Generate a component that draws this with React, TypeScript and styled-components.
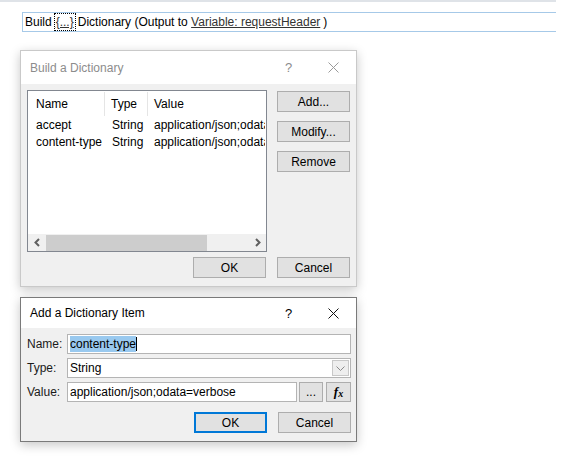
import React from "react";
import styled, { createGlobalStyle } from "styled-components";

const GlobalStyle = createGlobalStyle`
  html, body {
    margin: 0;
    padding: 0;
    background: #fff;
  }
  body {
    font-family: "Segoe UI", "Liberation Sans", Arial, sans-serif;
    font-size: 12px;
    color: #000;
  }
`;

const Page = styled.div`
  width: 568px;
  height: 458px;
  overflow: hidden;
  display: flex;
  flex-direction: column;
`;

const ActionStrip = styled.div`
  width: 556px;
  box-sizing: border-box;
  border-top: 2px solid #dfe3e8;
  padding: 10px 0 0 22px;
`;

const BuildRow = styled.div`
  height: 20px;
  box-sizing: border-box;
  border: 1px solid #a6c9e8;
  border-right: none;
  display: flex;
  align-items: center;
  padding-left: 2px;
  white-space: nowrap;
`;

const Token = styled.span`
  margin: 0 2px;
  height: 18px;
  box-sizing: border-box;
  border: 1px dotted #000;
  padding: 0 1px;
  display: flex;
  align-items: center;
  text-decoration: underline;
  color: #333;
`;

const VarLink = styled.span`
  text-decoration: underline;
  color: #333;
  margin-right: 3px;
`;

const Stack = styled.div`
  margin: 18px 0 0 20px;
  display: flex;
  flex-direction: column;
  gap: 10px;
`;

const Dialog = styled.div<{ $border: string }>`
  width: 337px;
  box-sizing: border-box;
  border: 1px solid ${(p) => p.$border};
  background: #f0f0f0;
  box-shadow: 0 3px 10px rgba(0, 0, 0, 0.22);
`;

const TitleBar = styled.div<{ $h: number; $color: string }>`
  height: ${(p) => p.$h}px;
  background: #fff;
  display: flex;
  align-items: center;
  padding-left: 9px;
  color: ${(p) => p.$color};
`;

const TitleText = styled.div`
  flex: 1;
`;

const CaptionButton = styled.div`
  width: 45px;
  height: 100%;
  display: flex;
  align-items: center;
  justify-content: center;
  font-size: 13px;
`;

const Body = styled.div<{ $pad: string }>`
  padding: ${(p) => p.$pad};
  display: flex;
  flex-direction: column;
`;

const TopArea = styled.div`
  display: flex;
  gap: 10px;
`;

const ListBox = styled.div`
  width: 240px;
  height: 162px;
  box-sizing: border-box;
  border: 1px solid #828790;
  background: #fff;
  display: flex;
  flex-direction: column;
  overflow: hidden;
`;

const ListHeader = styled.div`
  height: 25px;
  display: flex;
  flex-shrink: 0;
`;

const ListRow = styled.div`
  height: 17px;
  display: flex;
  align-items: center;
  flex-shrink: 0;
`;

const Cell = styled.div<{ $w?: number; $pad: number; $sep?: boolean }>`
  ${(p) => (p.$w ? `width: ${p.$w}px; flex-shrink: 0;` : "flex: 1;")}
  box-sizing: border-box;
  padding-left: ${(p) => p.$pad}px;
  white-space: nowrap;
  overflow: hidden;
  display: flex;
  align-items: center;
  border-right: 1px solid ${(p) => (p.$sep ? "#e5e5e5" : "transparent")};
  margin: ${(p) => (p.$sep ? "1px 0 0" : "0")};
`;

const Filler = styled.div`
  flex: 1;
`;

const HScroll = styled.div`
  height: 17px;
  background: #f0f0f0;
  display: flex;
  align-items: center;
  flex-shrink: 0;
`;

const ScrollArrow = styled.div`
  width: 17px;
  height: 100%;
  display: flex;
  align-items: center;
  justify-content: center;
`;

const ScrollTrack = styled.div`
  flex: 1;
  height: 100%;
  display: flex;
  align-items: center;
`;

const ScrollThumb = styled.div`
  height: 16px;
  background: #cdcdcd;
  margin-left: 1px;
`;

const ButtonColumn = styled.div`
  display: flex;
  flex-direction: column;
  gap: 9px;
  padding-top: 1px;
`;

const Button = styled.div<{ $default?: boolean; $w?: number }>`
  width: ${(p) => p.$w ?? 73}px;
  height: ${(p) => (p.$w ? 20 : 21)}px;
  box-sizing: border-box;
  background: #e1e1e1;
  border: ${(p) => (p.$default ? "2px solid #0078d7" : "1px solid #adadad")};
  display: flex;
  align-items: center;
  justify-content: center;
  flex-shrink: 0;
`;

const ButtonRow = styled.div<{ $top: number }>`
  display: flex;
  justify-content: flex-end;
  gap: 11px;
  margin-top: ${(p) => p.$top}px;
`;

const FormRows = styled.div`
  display: flex;
  flex-direction: column;
  gap: 4px;
`;

const FormRow = styled.div`
  display: flex;
  align-items: center;
  height: 20px;
`;

const Label = styled.div`
  width: 40px;
  flex-shrink: 0;
  color: #1a1a1a;
`;

const Field = styled.div`
  flex: 1;
  height: 20px;
  box-sizing: border-box;
  border: 1px solid #b4b4b4;
  background: #fff;
  display: flex;
  align-items: center;
  padding-left: 2px;
  white-space: nowrap;
  overflow: hidden;
`;

const Selected = styled.span`
  background: #99c9ef;
  padding: 1px 0;
`;

const Caret = styled.span`
  width: 1px;
  height: 14px;
  background: #000;
`;

const DropArrow = styled.div`
  margin-left: auto;
  width: 17px;
  height: 16px;
  margin-right: 1px;
  box-sizing: border-box;
  border: 1px solid #c8c8c8;
  background: #eeeeee;
  display: flex;
  align-items: center;
  justify-content: center;
`;

const SideButton = styled(Button)`
  margin-left: 2px;
  & + & {
    margin-left: 3px;
  }
`;

const Fx = styled.span`
  font-family: "Liberation Serif", "Times New Roman", serif;
  font-style: italic;
  font-weight: bold;
  font-size: 13px;
  sub {
    font-size: 10px;
    vertical-align: -1px;
  }
`;

const CloseIcon = ({ color }: { color: string }) => (
  <svg width="11" height="11" viewBox="0 0 11 11">
    <path d="M0.5 0.5 L10.5 10.5 M10.5 0.5 L0.5 10.5" stroke={color} strokeWidth="1" />
  </svg>
);

const Chevron = ({ dir }: { dir: "left" | "right" | "down" }) => {
  if (dir === "down") {
    return (
      <svg width="9" height="5" viewBox="0 0 9 5">
        <polyline points="0.5,0.5 4.5,4.5 8.5,0.5" fill="none" stroke="#8a8a8a" strokeWidth="1" />
      </svg>
    );
  }
  const pts = dir === "left" ? "5,1 1.5,4.5 5,8" : "1,1 4.5,4.5 1,8";
  return (
    <svg width="6" height="9" viewBox="0 0 6 9">
      <polyline points={pts} fill="none" stroke="#606060" strokeWidth="2" />
    </svg>
  );
};

const entries = [
  { name: "accept", type: "String", value: "application/json;odata=verbose" },
  { name: "content-type", type: "String", value: "application/json;odata=verbose" },
];

export default function App() {
  return (
    <Page>
      <GlobalStyle />
      <ActionStrip>
        <BuildRow>
          Build<Token>{"{...}"}</Token>Dictionary (Output to&nbsp;
          <VarLink>Variable: requestHeader</VarLink>)
        </BuildRow>
      </ActionStrip>

      <Stack>
        <Dialog $border="#c9c9c9">
          <TitleBar $h={33} $color="#8c8c8c">
            <TitleText>Build a Dictionary</TitleText>
            <CaptionButton>?</CaptionButton>
            <CaptionButton>
              <CloseIcon color="#9a9a9a" />
            </CaptionButton>
          </TitleBar>
          <Body $pad="6px 6px 8px 6px">
            <TopArea>
              <ListBox>
                <ListHeader>
                  <Cell $w={77} $pad={8} $sep>Name</Cell>
                  <Cell $w={43} $pad={6} $sep>Type</Cell>
                  <Cell $pad={6}>Value</Cell>
                </ListHeader>
                {entries.map((e) => (
                  <ListRow key={e.name}>
                    <Cell $w={77} $pad={8}>{e.name}</Cell>
                    <Cell $w={43} $pad={7}>{e.type}</Cell>
                    <Cell $pad={6}>{e.value}</Cell>
                  </ListRow>
                ))}
                <Filler />
                <HScroll>
                  <ScrollArrow>
                    <Chevron dir="left" />
                  </ScrollArrow>
                  <ScrollTrack>
                    <ScrollThumb style={{ width: 161 }} />
                  </ScrollTrack>
                  <ScrollArrow>
                    <Chevron dir="right" />
                  </ScrollArrow>
                </HScroll>
              </ListBox>
              <ButtonColumn>
                <Button>Add...</Button>
                <Button>Modify...</Button>
                <Button>Remove</Button>
              </ButtonColumn>
            </TopArea>
            <ButtonRow $top={5}>
              <Button>OK</Button>
              <Button>Cancel</Button>
            </ButtonRow>
          </Body>
        </Dialog>

        <Dialog $border="#7a7a7a">
          <TitleBar $h={30} $color="#000">
            <TitleText>Add a Dictionary Item</TitleText>
            <CaptionButton>?</CaptionButton>
            <CaptionButton>
              <CloseIcon color="#111" />
            </CaptionButton>
          </TitleBar>
          <Body $pad="6px 5px 8px 6px">
            <FormRows>
              <FormRow>
                <Label>Name:</Label>
                <Field>
                  <Selected>content-type</Selected>
                  <Caret />
                </Field>
              </FormRow>
              <FormRow>
                <Label>Type:</Label>
                <Field>
                  String
                  <DropArrow>
                    <Chevron dir="down" />
                  </DropArrow>
                </Field>
              </FormRow>
              <FormRow>
                <Label>Value:</Label>
                <Field>application/json;odata=verbose</Field>
                <SideButton $w={24}>...</SideButton>
                <SideButton $w={25}>
                  <Fx>
                    f<sub>x</sub>
                  </Fx>
                </SideButton>
              </FormRow>
            </FormRows>
            <ButtonRow $top={10}>
              <Button $default>OK</Button>
              <Button>Cancel</Button>
            </ButtonRow>
          </Body>
        </Dialog>
      </Stack>
    </Page>
  );
}
